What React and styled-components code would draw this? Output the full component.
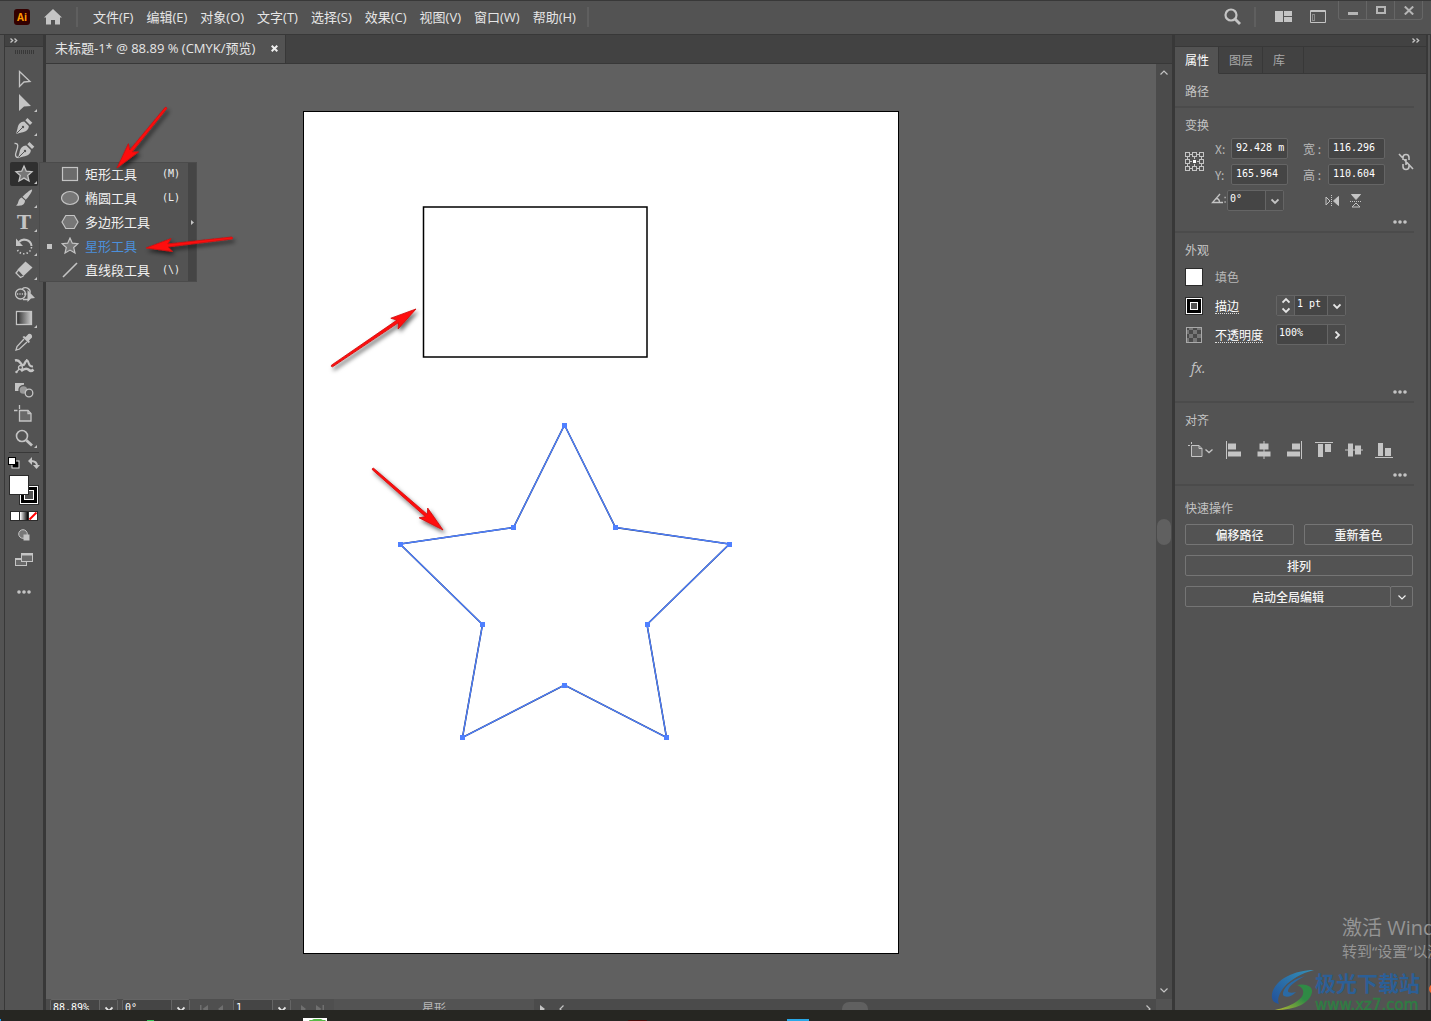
import { useState } from 'react';
import styled, { createGlobalStyle } from 'styled-components';

const c = {
  bg: '#535353',
  dark: '#424242',
  line: '#383838',
  canvas: '#606060',
  track: '#4b4b4b',
  field: '#454545',
  fieldLine: '#656565',
  icon: '#c4c4c4',
  text: '#e6e6e6',
  muted: '#b8b8b8',
  blue: '#4b8fdb',
};

const sans = `"Open Sans", "Noto Sans CJK SC", sans-serif`;
const song = `"Noto Sans CJK SC", sans-serif`;
const mono = `"DejaVu Sans Mono", "Noto Sans CJK SC", monospace`;

const GlobalStyle = createGlobalStyle`
  * { box-sizing: border-box; }
  body { margin: 0; background: ${c.bg}; font-family: ${sans}; color: ${c.text}; overflow: hidden; }
  button, input, select { font: inherit; color: inherit; margin: 0; padding: 0; border: 0; background: none; border-radius: 0; outline: none; }
  select { appearance: none; }
  svg { display: block; flex: none; }
`;

// --- SHELL ---

const Screen = styled.div`
  position: relative; display: flex; flex-direction: column;
  height: 100vh; overflow: hidden; background: ${c.bg};
`;

const TopBar = styled.header`
  display: flex; align-items: center; height: 34px; flex: none;
  padding: 0 0 2px 14px; border-top: 1px solid ${c.line};
`;

const Body = styled.div`
  display: flex; flex: 1; min-height: 0; padding: 0 2px 0 4px;
  border-top: 1px solid ${c.line}; border-right: 1px solid ${c.line};
`;

const Taskbar = styled.footer`
  display: flex; align-items: flex-end; height: 11px; flex: none;
  background: #262622; overflow: hidden;
`;

const TaskIcon = styled.span`
  width: ${({ $w }) => $w}px; height: ${({ $h }) => $h}px;
  margin-left: ${({ $gap }) => $gap}px; background: ${({ $color }) => $color};
  border-radius: ${({ $round }) => ($round ? '4px 4px 0 0' : '0')};
`;

// --- TOP BAR ---

const AiLogo = styled.span`
  display: flex; align-items: center; justify-content: center;
  width: 16px; height: 16px; border-radius: 3px; background: #330000;
  color: #ff9a00; font: bold 10px/16px "Open Sans", sans-serif;
`;

const IconButton = styled.button`
  display: flex; align-items: center; justify-content: center;
  color: ${c.icon}; margin-left: ${({ $gap }) => $gap || 0}px;
`;

const Divider = styled.span`
  width: 2px; height: 20px; background: #5f5f5f; margin: 0 15px 0 ${({ $left }) => $left || 0}px;
`;

const Menu = styled.nav`
  display: flex; gap: 13px;
  button { font-size: 13px; line-height: 20px; white-space: nowrap; }
`;

const Spacer = styled.span` flex: 1; `;

const WindowButtons = styled.div`
  display: flex; align-self: flex-start; height: 19px;
  margin: 0 8px 0 12px; border: 1px solid #666; border-top: 0; border-radius: 0 0 3px 3px;
  button { display: flex; align-items: center; justify-content: center; width: 27px; color: #b5b5b5; }
  button + button { width: 28px; border-left: 1px solid #666; }
`;

// --- TOOL RAIL ---

const Rail = styled.aside`
  display: flex; flex-direction: column; align-items: center; flex: none; width: 42px;
  border-left: 1px solid ${c.line}; border-right: 3px solid ${c.line};
`;

const RailHead = styled.div`
  display: flex; align-items: center; align-self: stretch; height: 12px;
  padding: ${({ $right }) => ($right ? '0 6px 0 0' : '0 0 0 5px')};
  justify-content: ${({ $right }) => ($right ? 'flex-end' : 'flex-start')};
  background: ${c.dark}; border-bottom: 1px solid ${c.line}; color: ${c.icon}; flex: none;
`;

const Grip = styled.span`
  width: 19px; height: 4px; margin: 3px 0 12px;
  background: repeating-linear-gradient(90deg, ${c.line} 0 1px, transparent 1px 2px);
`;

const ToolSlot = styled.div` position: relative; height: 24px; display: flex; align-items: center; `;

const ToolButton = styled.button`
  display: block; width: 28px; height: 24px; color: ${c.icon};
  background: ${({ $active }) => ($active ? '#2f2f2f' : 'transparent')};
  border-radius: 2px;
`;

const RailLine = styled.span` width: 30px; height: 1px; margin: 2px 0 4px; background: ${c.line}; flex: none; `;

const RailButton = styled.button`
  display: flex; justify-content: center; color: ${c.icon}; margin-bottom: ${({ $after }) => $after || 0}px;
`;

const RailRow = styled.div` display: flex; gap: 8px; height: 13px; margin-bottom: 5px; `;

const Flyout = styled.div`
  position: absolute; left: 29px; top: 0; z-index: 5; display: flex; width: 158px;
  background: ${c.bg}; border: 1px solid #4b4b4b;
`;

const FlyoutList = styled.div`
  flex: 1; display: flex; flex-direction: column; padding: 0 0 0 7px; margin-top: -1px; height: 119px;
`;

const FlyoutItem = styled.button`
  display: grid; grid-template-columns: 14px 24px 77px 1fr; align-items: center;
  height: 24px; flex: none; text-align: left;
  font: 13px/20px ${song}; color: ${({ $on }) => ($on ? c.blue : '#f0f0f0')};
  svg { color: ${c.icon}; }
  kbd { font: 10px/20px ${mono}; white-space: nowrap; }
`;

const Bullet = styled.i` width: 5px; height: 5px; background: ${({ $on }) => ($on ? c.icon : 'transparent')}; `;

const TearOff = styled.button`
  display: flex; align-items: center; justify-content: center; width: 8px;
  background: ${c.field}; color: ${c.icon};
`;

// --- DOCUMENT ---

const Doc = styled.main` flex: 1; min-width: 0; display: flex; flex-direction: column; `;

const DocTabs = styled.div`
  display: flex; height: 29px; flex: none; background: ${c.dark}; border-bottom: 1px solid ${c.line};
`;

const DocTab = styled.div`
  display: flex; align-items: center; gap: 16px; padding: 0 7px 2px 9px;
  background: ${c.bg}; border-right: 1px solid ${c.line};
  font-size: 13px; line-height: 20px; white-space: nowrap;
`;

const Stage = styled.div` flex: 1; display: flex; min-height: 0; `;

const Canvas = styled.div`
  flex: 1; display: flex; align-items: center; justify-content: center;
  padding-top: 2px; background: ${c.canvas}; overflow: hidden;
`;

const Artboard = styled.div` flex: none; background: #fff; border: 1px solid #000; `;

const VScroll = styled.div`
  display: flex; flex-direction: column; align-items: center; justify-content: space-between;
  width: 16px; padding: 5px 0; background: ${c.track}; color: ${c.icon};
`;

const Thumb = styled.span`
  width: ${({ $wide }) => ($wide ? 26 : 14)}px; height: ${({ $wide }) => ($wide ? 14 : 26)}px;
  border-radius: 7px; background: ${c.canvas};
`;

const StatusBar = styled.div`
  display: flex; height: 11px; flex: none; overflow: hidden; padding-left: 4px;
  background: #4b4b4b; font: 10px/17px ${mono};
  > * { height: 19px; }
`;

const StatusNav = styled.div`
  display: flex; align-items: center; justify-content: center; gap: 10px;
  width: 43px; color: #6f6f6f; background: #4f4f4f;
`;

const StatusText = styled.div`
  width: 200px; text-align: center; background: ${c.bg}; font: 12px/18px ${song}; color: ${c.muted};
`;

const HScroll = styled.div`
  flex: 1; display: flex; align-items: center; justify-content: space-between;
  padding: 0 4px 0 12px; color: ${c.icon};
`;

const Corner = styled.div` width: 16px; background: ${c.bg}; `;

// --- FORM PARTS ---

const TextField = styled.input`
  width: 100%; min-width: 0; height: 21px; padding: 0 0 3px 4px;
  background: ${c.field}; border: 1px solid ${c.fieldLine}; border-radius: 2px;
  font: 10px/17px ${mono}; color: #fff;
`;

const SelectBox = styled.div`
  position: relative; display: flex; width: ${({ $w }) => $w}px; height: ${({ $h }) => $h || 21}px;
  background: ${c.field}; border: 1px solid ${c.fieldLine}; border-radius: 2px;
  margin-left: ${({ $gap }) => $gap || 0}px;
  select { flex: 1; min-width: 0; padding: 0 20px 3px 2px; font: 10px/16px ${mono}; color: #fff; }
`;

const SelectArrow = styled.span`
  position: absolute; right: 0; top: 0; bottom: 0; width: 18px; pointer-events: none;
  display: flex; align-items: center; justify-content: center;
  background: ${c.track}; border-left: 1px solid ${c.fieldLine};
`;

const Stepper = styled.span`
  display: flex; flex-direction: column; justify-content: space-around; align-items: center;
  width: 18px; border-right: 1px solid ${c.fieldLine}; background: ${c.bg};
`;

// --- PROPERTIES PANEL ---

const Panel = styled.aside`
  display: flex; flex-direction: column; flex: none; width: 256px;
  border-left: 3px solid ${c.line}; border-right: 2px solid ${c.line};
`;

const PanelTabs = styled.div`
  display: flex; height: 27px; background: ${c.dark}; flex: none;
  &::after { content: ''; flex: 1; border-bottom: 1px solid ${c.line}; }
`;

const PanelTab = styled.button`
  padding: 0 ${({ $wide }) => ($wide ? 18 : 9)}px 0 10px; font: 12px/20px ${song};
  color: ${({ $on }) => ($on ? '#fff' : '#a8a8a8')};
  background: ${({ $on }) => ($on ? c.bg : 'transparent')};
  border-right: 1px solid ${c.line};
  border-bottom: 1px solid ${({ $on }) => ($on ? c.bg : c.line)};
`;

const Section = styled.section`
  margin-right: 12px; padding: ${({ $top }) => $top || 9}px 0 ${({ $bottom }) => $bottom || 3}px 10px;
  border-bottom: 2px solid ${({ $last }) => ($last ? 'transparent' : c.track)};
`;

const Heading = styled.h2`
  margin: 0; font: 12px/16px ${song}; color: #c4c4c4;
`;

const TransformGrid = styled.div`
  display: grid; grid-template-columns: 30px 16px 57px 40px 57px 1fr; grid-auto-rows: 21px;
  row-gap: 5px; margin-top: 5px; align-items: center; color: ${c.muted};
  > svg, > button { grid-row: 1 / span 2; }
  > svg { grid-column: 1; }
  > button { grid-column: 6; justify-self: end; }
`;

const FieldLabel = styled.label`
  padding-left: ${({ $wide }) => ($wide ? 15 : 0)}px; font: 12px/16px ${song}; color: ${c.muted}; white-space: nowrap;
`;

const AngleRow = styled.div`
  display: flex; align-items: center; margin-top: 5px; padding-left: 26px; color: ${c.icon};
`;

const MoreButton = styled.button`
  display: flex; align-items: center; justify-content: center; width: 26px; height: 12px;
  margin: ${({ $top }) => $top}px 1px 0 auto; color: ${c.icon};
`;

const LookGrid = styled.div`
  display: grid; grid-template-columns: 30px 61px 70px; grid-auto-rows: 29px;
  align-items: center; margin-top: 4px; font: 12px/16px ${song};
`;

const LinkText = styled.a`
  justify-self: start; color: #fff; text-decoration: none; border-bottom: 1px dotted #ddd; line-height: 15px; white-space: nowrap;
`;

const PlainText = styled.span` color: ${c.muted}; `;

const FxButton = styled.button`
  display: block; margin: 9px 0 0 6px; height: 20px; color: ${c.icon};
  font: italic 14px/20px "Open Sans", sans-serif;
`;

const AlignRow = styled.div`
  display: flex; height: 21px; margin-top: 11px; color: ${c.icon};
  button { display: flex; align-items: center; justify-content: center; width: 30px; }
  button:first-child { width: 34px; justify-content: flex-start; padding-left: 3px; }
`;

const Actions = styled.div`
  display: grid; grid-template-columns: 1fr 1fr; gap: 10px; margin: 8px 1px 0 0;
`;

const ActionButton = styled.button`
  height: 21px; font: 500 12px/17px ${song}; color: #f2f2f2;
  border: 1px solid #757575; border-radius: 2px;
  grid-column: ${({ $full }) => ($full ? '1 / -1' : 'auto')};
`;

const SplitAction = styled.div`
  grid-column: 1 / -1; display: flex;
  ${ActionButton}:first-child { flex: 1; }
  ${ActionButton}:last-child { width: 23px; margin-left: -1px; display: flex; align-items: center; justify-content: center; }
`;

// --- OVERLAYS ---

const Annotations = styled.svg` position: absolute; left: 0; top: 0; z-index: 9; pointer-events: none; `;

const ActivateNote = styled.div`
  position: absolute; right: 0; bottom: 60px; width: 89px; overflow: hidden; z-index: 8;
  color: #959595; white-space: nowrap; pointer-events: none;
  strong { display: block; font: 20px/26px ${sans}; }
  span { display: block; font: 15px/20px ${sans}; }
`;

const SiteMark = styled.div`
  position: absolute; right: 0; bottom: 11px; height: 40px; width: 160px; overflow: hidden; z-index: 8;
  display: flex; gap: 1px; pointer-events: none; white-space: nowrap;
  strong { display: block; font: 700 21px/25px ${song}; color: #2c5f96; }
  span { display: block; font: 15px/20px "DejaVu Sans", sans-serif; color: #2f7d43; -webkit-text-stroke: 0.5px #2f7d43; }
`;

const EdgeDot = styled.i`
  position: absolute; right: -8px; bottom: 27px; width: 10px; height: 10px;
  border-radius: 50%; background: #f0642d; z-index: 8;
`;

// --- ICONS ---

const Chevron = ({ dir = 'down', size = 8, w = 1.5 }) => {
  const turn = { down: 0, left: 90, up: 180, right: 270 }[dir];
  return (
    <svg width={size} height={size} viewBox="0 0 8 8" fill="none" stroke="currentColor" strokeWidth={w}>
      <path d="M.5 2.500 4 6l3.500-3.500" transform={`rotate(${turn} 4 4)`} />
    </svg>
  );
};

const DoubleChevron = () => (
  <svg width="8" height="5" viewBox="0 0 8 5" fill="none" stroke="currentColor" strokeWidth="1.300">
    <path d="M.5.5l2.200 2-2.200 2M4.500.5l2.200 2-2.200 2" />
  </svg>
);

const Dots = () => (
  <svg width="14" height="4" viewBox="0 0 14 4" fill="currentColor">
    <circle cx="2" cy="2" r="1.800" /><circle cx="7" cy="2" r="1.800" /><circle cx="12" cy="2" r="1.800" />
  </svg>
);

const STAR = 'M0-8 2.300-2.800 8-2.300 3.700 1.500 5 7 0 4.100-5 7-3.700 1.500-8-2.300-2.300-2.800Z';

const Pen = () => (
  <g stroke="none">
    <path d="M1.300-5.800 3.500-8 8.300-3.200 6-1Z" fill="currentColor" />
    <path d="M.2-4.600 4.800 0C5 3.500 1.500 6-2.500 6.500L-8 8-6.500 2.500C-6-1.500-3.500-4.600.2-4.600Z" fill="currentColor" />
    <path d="M-7.500 7.500-1.500 1.500" stroke={c.bg} strokeWidth="1" />
    <circle cx="-1" cy="1" r="1.200" fill={c.bg} />
  </g>
);

const solid = { fill: 'currentColor', stroke: 'none' };
const tools = [
  { name: '选择工具', art: <path d="M-4.500-6.500 6 3.500 0 4-4.500 8.500Z" /> },
  { name: '直接选择工具', more: true, art: <path d="M-5-8 7 4 0 4.500-5 9Z" {...solid} /> },
  { name: '钢笔工具', more: true, art: <Pen /> },
  { name: '曲率工具', art: <g><g transform="translate(2 0)"><Pen /></g><path d="M-9.500-6.500C-5-7-6-3-7.500 1-9 5-9 7.500-5.500 7.500" /></g> },
  { name: '星形工具', more: true, art: <path d={STAR} fill="#777" /> },
  { name: '画笔工具', more: true, art: <g {...solid}><path d="M8-8.500C9-7.500 4.500-1 1.800 1.800L-1.500-1.200C1-4 7-9 8-8.500Z" /><path d="M-2.300-.4 1 2.600C1 7-3 8.500-8 7.500-5 6.500-6.500 1-2.300-.4Z" /></g> },
  { name: '文字工具', more: true, art: <text x="0" y="7" textAnchor="middle" fontFamily="DejaVu Serif" fontWeight="bold" fontSize="19" {...solid}>T</text> },
  { name: '旋转工具', more: true, art: <g><path d="M-5-4C-1-8.500 7-6 7.500 0" strokeWidth="2" /><path d="M-8-7.500v7.500h7Z" {...solid} /><path d="M7.500 1C7 8-3 10.500-6.500 4" strokeDasharray="1.500 2" strokeWidth="1.600" /></g> },
  { name: '橡皮擦工具', more: true, art: <g><path d="M1.500-8.500 8.500-2.500-.5 6-6.500-.5Z" {...solid} /><path d="M-5.500 0-8 3-3.500 7.500-.5 6" /></g> },
  { name: '形状生成器工具', art: <g><circle cx="-3.500" cy="0" r="5" /><path d="M-2-5C2-8 7-5 6-1M-1 5.500H4" /><path d="M-7 0H3" strokeDasharray="1.200 1.200" /><path d="M3.500-4 11 4 7 4.500 3.500 8Z" {...solid} /></g> },
  { name: '渐变工具', more: true, art: <rect x="-7.500" y="-6.500" width="15" height="13" fill="url(#gradTool)" /> },
  { name: '吸管工具', art: <g><path d="M3.500-7C5-9.500 9-7.500 8-4.500L5-1.500 6 0 4.500 1-1.500-5 0-6 1.500-5Z" {...solid} /><path d="M0-3-7 4.500-8 8-4.500 7 3 0" /></g> },
  { name: '操控变形工具', art: <g><path d="M-9-5.500C-4-7-4-2-1.500-1 1 0 0-4 3-5.500" strokeWidth="2.400" /><path d="M2-6C6-6 3 1 9 .5" strokeWidth="2" /><path d="M-3 5C1 2 3 2 5 4 6.500 5.500 8 5 9.500 3.500" strokeWidth="2.600" /><circle cx="-3.500" cy="1.500" r="2" fill={c.bg} /><path d="M-8 6.500l3.200-3.500" /><circle cx="-7.500" cy="6" r="1.200" {...solid} /></g> },
  { name: '混合工具', art: <g><rect x="-9" y="-7" width="9" height="8" {...solid} /><circle cx="-.5" cy="0" r="4.500" fill="#999" stroke={c.bg} /><circle cx="5" cy="3" r="3.800" fill={c.bg} /></g> },
  { name: '画板工具', art: <g><path d="M-4.500-3.500H4L7-.5V7H-4.500Z" fill="#696969" /><path d="M4-3.500V-.5H7M-4.500-9V-5M-10-3.500H-6.500" /></g> },
  { name: '缩放工具', more: true, art: <g><circle cx="-2" cy="-2" r="5.500" strokeWidth="1.600" /><path d="M2.300 2.300 8 7.500" strokeWidth="2.800" /></g> },
];

const ToolIcon = ({ tool }) => (
  <svg width="28" height="24" viewBox="-14 -12 28 24" fill="none" stroke="currentColor" strokeWidth="1.300">
    <defs>
      <linearGradient id="gradTool"><stop stopColor="#2b2b2b" /><stop offset="1" stopColor="#ccc" /></linearGradient>
    </defs>
    {tool.art}
    {tool.more && <path d="M13 7v3h-3Z" {...solid} />}
  </svg>
);

const shapeTools = [
  { name: '矩形工具', hotkey: '(M)', art: <rect x="-7.500" y="-6.500" width="15" height="13" fill="#6b6b6b" /> },
  { name: '椭圆工具', hotkey: '(L)', art: <ellipse rx="8.500" ry="6.500" fill="#777" /> },
  { name: '多边形工具', art: <path d="M-8 0-4.200-6.500H4.200L8 0 4.200 6.500H-4.200Z" fill="#777" /> },
  { name: '星形工具', art: <path d={STAR} fill="#777" /> },
  { name: '直线段工具', hotkey: '(\\)', art: <path d="M-7 7 7-7" strokeWidth="1.600" /> },
];

const alignIcons = [
  ['水平左对齐', 'M-8-9h1V9h-1ZM-6-6.500h8v6h-8ZM-6 1.500h13v5h-13Z'],
  ['水平居中对齐', 'M-.5-9h1V9h-1ZM-4.500-6.500h9v6h-9ZM-6.500 1.500h13v5h-13Z'],
  ['水平右对齐', 'M7-9h1V9h-1ZM-2-6.500h8v6h-8ZM-7 1.500H6v5H-7Z'],
  ['垂直顶对齐', 'M-9-8h18v1H-9ZM-6-6h5V7h-5ZM1-6h6v8H1Z'],
  ['垂直居中对齐', 'M-9-.5H9v1H-9ZM-6-6.500h5v13h-5ZM1-4.500h6v9H1Z'],
  ['垂直底对齐', 'M-9 7H9v1H-9ZM-6-7h5V6h-5ZM1-2h6v8H1Z'],
];

const ReferencePoint = () => (
  <svg width="19" height="19" viewBox="0 0 19 19" fill="none" stroke={c.icon}>
    <path d="M2.500 2.500h14v14h-14ZM9.500 2.500v14M2.500 9.500h14" />
    {[2.5, 9.5, 16.5].map(y => [2.5, 9.5, 16.5].map(x => (
      <rect key={`${x}-${y}`} x={x - 2} y={y - 2} width="4" height="4"
        fill={x === 9.5 && y === 9.5 ? '#fff' : c.bg} stroke={x === 9.5 && y === 9.5 ? c.bg : c.icon} />
    )))}
  </svg>
);

const StrokeSwatch = () => (
  <svg width="18" height="18" viewBox="0 0 18 18">
    <rect width="18" height="18" fill="#2b2b2b" />
    <rect x="1.500" y="1.500" width="15" height="15" fill="#000" stroke="#fff" />
    <rect x="5.500" y="5.500" width="7" height="7" fill={c.bg} stroke="#fff" />
  </svg>
);

const Arrow = ({ from, to }) => {
  const dx = to[0] - from[0];
  const dy = to[1] - from[1];
  const len = Math.hypot(dx, dy);
  const angle = (Math.atan2(dy, dx) * 180) / Math.PI;
  return (
    <g filter="url(#arrowShadow)">
      <path
        d={`M0 0L-26-6.500-22-1.500L${-len}-1Q${-len - 1.5} 0 ${-len} 1L-22 1.500-26 6.500Z`}
        transform={`translate(${to[0]} ${to[1]}) rotate(${angle})`}
        fill="#ff0a0a" stroke="#d01010" strokeWidth="0.800"
      />
    </g>
  );
};

// --- DATA ---

const menus = ['文件(F)', '编辑(E)', '对象(O)', '文字(T)', '选择(S)', '效果(C)', '视图(V)', '窗口(W)', '帮助(H)'];

const starPoints = [
  [260.5, 313], [311.5, 415.5], [425.5, 432], [343, 512.5], [362.5, 625.5],
  [260.5, 573], [158.5, 625.5], [178.5, 512.5], [96, 432], [209.5, 415.5],
];

const Select = ({ id, label, value, w, h, gap, arrow = 'down', children }) => (
  <SelectBox $w={w} $h={h} $gap={gap}>
    {children}
    <select id={id} aria-label={label} defaultValue={value}><option>{value}</option></select>
    <SelectArrow><Chevron dir={arrow} w={1.8} /></SelectArrow>
  </SelectBox>
);

const ToolRail = () => {
  const [tool, setTool] = useState('星形工具');
  return (
    <Rail>
      <RailHead><DoubleChevron /></RailHead>
      <Grip />
      {tools.map(t => (
        <ToolSlot key={t.name}>
          <ToolButton aria-label={t.name} $active={t.name === tool} onClick={() => setTool(t.name)}>
            <ToolIcon tool={t} />
          </ToolButton>
          {t.name === '星形工具' && (
            <Flyout>
              <FlyoutList>
                {shapeTools.map(s => (
                  <FlyoutItem key={s.name} $on={s.name === tool}>
                    <Bullet $on={s.name === tool} />
                    <svg width="18" height="18" viewBox="-9 -9 18 18" fill="none" stroke="currentColor" strokeWidth="1.200">{s.art}</svg>
                    <span>{s.name}</span>
                    <kbd>{s.hotkey}</kbd>
                  </FlyoutItem>
                ))}
              </FlyoutList>
              <TearOff aria-label="拖出">
                <svg width="3" height="5" viewBox="0 0 3 5"><path d="M0 0 3 2.500 0 5Z" fill="currentColor" /></svg>
              </TearOff>
            </Flyout>
          )}
        </ToolSlot>
      ))}
      <RailLine />
      <RailRow>
        <RailButton aria-label="默认填色和描边">
          <svg width="12" height="13" viewBox="0 0 12 13">
            <rect x="4" y="4" width="7" height="7" fill="#000" stroke="#ddd" />
            <rect x=".5" y=".5" width="7" height="7" fill="#fff" stroke="#000" />
          </svg>
        </RailButton>
        <RailButton aria-label="互换填色和描边">
          <svg width="12" height="13" viewBox="0 0 12 13" fill="none" stroke="currentColor" strokeWidth="2">
            <path d="M3 4C7 4 9 5 9 9" /><path d="M4 0v8L0 4ZM5 8h7L8.500 12Z" {...solid} />
          </svg>
        </RailButton>
      </RailRow>
      <RailButton aria-label="填色和描边" $after={6}>
        <svg width="30" height="30" viewBox="0 0 30 30">
          <g transform="translate(10 10)">
            <rect width="20" height="20" fill="#2b2b2b" />
            <rect x="1.500" y="1.500" width="17" height="17" fill="#000" stroke="#fff" />
            <rect x="5.500" y="5.500" width="9" height="9" fill={c.bg} stroke="#fff" />
          </g>
          <rect x=".5" y=".5" width="19" height="19" fill="#fff" stroke="#2b2b2b" />
        </svg>
      </RailButton>
      <RailButton aria-label="颜色" $after={8}>
        <svg width="28" height="10" viewBox="0 0 28 10">
          <defs><linearGradient id="bw"><stop stopColor="#fff" /><stop offset="1" /></linearGradient></defs>
          <rect width="28" height="10" fill="#2b2b2b" />
          <rect x="1" y="1" width="8" height="8" fill="#fff" />
          <rect x="10" y="1" width="8" height="8" fill="url(#bw)" />
          <rect x="19" y="1" width="8" height="8" fill="#fff" />
          <path d="M19.500 8.500l7-7" stroke="#f00" strokeWidth="2" />
        </svg>
      </RailButton>
      <RailButton aria-label="绘图模式" $after={12}>
        <svg width="12" height="12" viewBox="0 0 12 12">
          <circle cx="5" cy="5" r="4.300" fill="#777" stroke="currentColor" />
          <rect x="5.500" y="5.500" width="6" height="6" fill="currentColor" />
        </svg>
      </RailButton>
      <RailButton aria-label="屏幕模式" $after={24}>
        <svg width="18" height="13" viewBox="0 0 18 13" fill="#696969" stroke="currentColor">
          <rect x=".5" y="5.500" width="11" height="7" /><path d="M1 6h10" strokeWidth="2" />
          <rect x="6.500" y=".5" width="11" height="8" /><path d="M7 1.500h10" strokeWidth="2" />
        </svg>
      </RailButton>
      <RailButton aria-label="编辑工具栏"><Dots /></RailButton>
    </Rail>
  );
};

const DocumentArea = () => (
  <Doc>
    <DocTabs>
      <DocTab>
        未标题-1* @ 88.89 % (CMYK/预览)
        <IconButton aria-label="关闭">
          <svg width="7" height="7" viewBox="0 0 7 7" stroke="#eee" strokeWidth="2"><path d="M.7.7l5.600 5.600M6.300.7.7 6.300" /></svg>
        </IconButton>
      </DocTab>
    </DocTabs>
    <Stage>
      <Canvas>
        <Artboard>
          <svg width="594" height="841" viewBox="0 0 594 841" fill="none">
            <rect x="119.500" y="95" width="223.500" height="150" stroke="#000" strokeWidth="1.500" />
            <polygon points={starPoints.join(' ')} stroke="#1c2a4a" strokeWidth="1.500" />
            <polygon points={starPoints.join(' ')} stroke="#4f80ff" strokeWidth="1.300" />
            {starPoints.map(([x, y]) => (
              <rect key={`${x}-${y}`} x={Math.floor(x) - 2} y={Math.floor(y) - 2} width="5" height="5" fill="#4f80ff" />
            ))}
          </svg>
        </Artboard>
      </Canvas>
      <VScroll><Chevron dir="up" w={1.2} /><Thumb /><Chevron w={1.2} /></VScroll>
    </Stage>
    <StatusBar>
      <Select label="缩放" value="88.89%" w={68} h={19} />
      <Select label="旋转视图" value="0°" w={68} h={19} gap={4} />
      <StatusNav>
        <svg width="8" height="8" viewBox="0 0 8 8" fill="currentColor"><path d="M0 0h1.500v8H0ZM8 0v8L2.500 4Z" /></svg>
        <svg width="5" height="8" viewBox="0 0 5 8" fill="currentColor"><path d="M5 0v8L0 4Z" /></svg>
      </StatusNav>
      <Select label="画板" value="1" w={58} h={19} />
      <StatusNav>
        <svg width="5" height="8" viewBox="0 0 5 8" fill="currentColor"><path d="M0 0v8l5-4Z" /></svg>
        <svg width="8" height="8" viewBox="0 0 8 8" fill="currentColor"><path d="M6.500 0H8v8H6.500ZM0 0v8l5.500-4Z" /></svg>
      </StatusNav>
      <StatusText>星形</StatusText>
      <IconButton aria-label="状态栏选项" $gap={6}>
        <svg width="6" height="8" viewBox="0 0 6 8" fill="currentColor"><path d="M0 0v8l5-4Z" /></svg>
      </IconButton>
      <HScroll><Chevron dir="left" w={1.2} /><Thumb $wide /><Chevron dir="right" w={1.2} /></HScroll>
      <Corner />
    </StatusBar>
  </Doc>
);

const Properties = () => {
  const [tab, setTab] = useState('属性');
  return (
    <Panel>
      <RailHead $right><DoubleChevron /></RailHead>
      <PanelTabs>
        {['属性', '图层', '库'].map(t => (
          <PanelTab key={t} $on={t === tab} $wide={t === '库'} onClick={() => setTab(t)}>{t}</PanelTab>
        ))}
      </PanelTabs>

      <Section $bottom={7}><Heading>路径</Heading></Section>

      <Section>
        <Heading>变换</Heading>
        <TransformGrid>
          <ReferencePoint />
          <FieldLabel htmlFor="x">X:</FieldLabel><TextField id="x" defaultValue="92.428 m" />
          <FieldLabel htmlFor="w" $wide>宽 :</FieldLabel><TextField id="w" defaultValue="116.296" />
          <FieldLabel htmlFor="y">Y:</FieldLabel><TextField id="y" defaultValue="165.964" />
          <FieldLabel htmlFor="h" $wide>高 :</FieldLabel><TextField id="h" defaultValue="110.604" />
          <IconButton aria-label="约束宽高比例">
            <svg width="16" height="18" viewBox="0 0 16 18" fill="none" stroke={c.icon} strokeWidth="1.600">
              <path d="M5 7V4.500C5 .5 11 .5 11 4.500V7M5 11v2.500c0 4 6 4 6 0V11M8 6v6M1 1l14 15" />
            </svg>
          </IconButton>
        </TransformGrid>
        <AngleRow>
          <FieldLabel htmlFor="angle">
            <svg width="16" height="16" viewBox="0 0 16 16" fill="none" stroke={c.icon} strokeWidth="1.300">
              <path d="M9 1 1.500 9.500H12M5 5.500C7.500 5.500 8.500 7 8.500 9.500" />
              <path d="M13.500 4.500h1.200M13.500 9h1.200" />
            </svg>
          </FieldLabel>
          <Select id="angle" label="角度" value="0°" w={57} />
          <IconButton aria-label="水平翻转" $gap={41}>
            <svg width="14" height="12" viewBox="0 0 14 12" fill="none" stroke={c.icon}>
              <path d="M1 2v8l4-4Z" /><path d="M13.500 1.500v9L8.500 6Z" fill={c.icon} /><path d="M6.500 0v12" strokeDasharray="1 1" />
            </svg>
          </IconButton>
          <IconButton aria-label="垂直翻转" $gap={11}>
            <svg width="12" height="14" viewBox="0 0 12 14" fill="none" stroke={c.icon}>
              <path d="M2 13h8L6 9Z" /><path d="M1.500.5h9L6 5.500Z" fill={c.icon} /><path d="M0 7.500h12" strokeDasharray="1 1" />
            </svg>
          </IconButton>
        </AngleRow>
        <MoreButton $top={5} aria-label="更多变换选项"><Dots /></MoreButton>
      </Section>

      <Section>
        <Heading>外观</Heading>
        <LookGrid>
          <svg width="18" height="18"><rect x=".5" y=".5" width="17" height="17" fill="#fff" stroke="#2b2b2b" /></svg>
          <PlainText>填色</PlainText><span />
          <StrokeSwatch />
          <LinkText href="#stroke">描边</LinkText>
          <Select label="描边粗细" value="1 pt" w={70}>
            <Stepper><Chevron dir="up" w={1.8} /><Chevron w={1.8} /></Stepper>
          </Select>
          <svg width="18" height="18" viewBox="0 0 18 18">
            <defs>
              <pattern id="checks" width="8" height="8" patternUnits="userSpaceOnUse">
                <rect width="8" height="8" fill="#777" /><path d="M0 0h4v4H0ZM4 4h4v4H4Z" fill="#4b4b4b" />
              </pattern>
            </defs>
            <rect x="1.500" y="1.500" width="15" height="15" fill="url(#checks)" stroke="#aaa" />
          </svg>
          <LinkText href="#opacity">不透明度</LinkText>
          <Select label="不透明度" value="100%" w={70} arrow="right" />
        </LookGrid>
        <FxButton>fx.</FxButton>
        <MoreButton $top={8} aria-label="更多外观选项"><Dots /></MoreButton>
      </Section>

      <Section>
        <Heading>对齐</Heading>
        <AlignRow>
          <button aria-label="对齐画板">
            <svg width="25" height="18" viewBox="0 0 25 18" fill="none" stroke="currentColor">
              <path d="M3.500 4.500H11l3 3v8H3.500Z" fill="#696969" /><path d="M11 4.500v3h3M3.500 1v2M0 4.500h2" />
              <path d="M17.500 8.500l3.500 3 3.500-3" strokeWidth="1.400" />
            </svg>
          </button>
          {alignIcons.map(([name, d]) => (
            <button key={name} aria-label={name}>
              <svg width="18" height="18" viewBox="-9 -9 18 18" fill="currentColor"><path d={d} /></svg>
            </button>
          ))}
        </AlignRow>
        <MoreButton $top={9} aria-label="更多对齐选项"><Dots /></MoreButton>
      </Section>

      <Section $top={14} $last>
        <Heading>快速操作</Heading>
        <Actions>
          <ActionButton>偏移路径</ActionButton>
          <ActionButton>重新着色</ActionButton>
          <ActionButton $full>排列</ActionButton>
          <SplitAction>
            <ActionButton>启动全局编辑</ActionButton>
            <ActionButton aria-label="全局编辑选项"><Chevron w={1.2} /></ActionButton>
          </SplitAction>
        </Actions>
      </Section>
    </Panel>
  );
};

const App = () => (
  <Screen>
    <GlobalStyle />
    <TopBar>
      <AiLogo>Ai</AiLogo>
      <IconButton aria-label="主页" $gap={14}>
        <svg width="18" height="16" viewBox="0 0 18 16" fill="currentColor"><path d="M9 0l9 8.500h-2V15.500h-5V11H7v4.500H2V8.500H0Z" /></svg>
      </IconButton>
      <Divider $left={14} />
      <Menu>{menus.map(m => <button key={m}>{m}</button>)}</Menu>
      <Divider $left={11} />
      <Spacer />
      <IconButton aria-label="搜索">
        <svg width="17" height="17" viewBox="0 0 17 17" fill="none" stroke="currentColor" strokeWidth="2.200">
          <circle cx="7" cy="7" r="5.500" /><path d="M11 11l5 5" strokeWidth="2.800" />
        </svg>
      </IconButton>
      <Divider $left={13} />
      <IconButton aria-label="排列文档" $gap={4}>
        <svg width="17" height="11" viewBox="0 0 17 11" fill="currentColor"><path d="M0 0h8v11H0ZM9 0h8v5H9ZM9 6h8v5H9Z" /></svg>
      </IconButton>
      <IconButton aria-label="切换工作区" $gap={18}>
        <svg width="16" height="13" viewBox="0 0 16 13" fill="none" stroke="currentColor">
          <path d="M.5.5h15v12H.5ZM0 1.500h16" /><path d="M2.500 4.500h2v6h-2Z" strokeDasharray="1 1" />
        </svg>
      </IconButton>
      <WindowButtons>
        <button aria-label="最小化"><svg width="10" height="9"><path d="M0 6h10v3H0Z" fill="currentColor" /></svg></button>
        <button aria-label="最大化"><svg width="10" height="8"><rect x="1" y="1" width="8" height="6" fill="none" stroke="currentColor" strokeWidth="2" /></svg></button>
        <button aria-label="关闭窗口"><svg width="10" height="9" viewBox="0 0 10 9"><path d="M.8.5l8.400 8M9.200.5.8 8.500" stroke="currentColor" strokeWidth="2" /></svg></button>
      </WindowButtons>
    </TopBar>

    <Body>
      <ToolRail />
      <DocumentArea />
      <Properties />
    </Body>

    <Taskbar>
      <TaskIcon $w={1} $h={2} $gap={0} $color="#1d9bf0" />
      <TaskIcon $w={7} $h={1} $gap={146} $color="#35c759" />
      <TaskIcon $w={24} $h={3} $gap={149} $color="radial-gradient(ellipse at 60% 100%, #57b947 0 8px, #fff 9px)" />
      <TaskIcon $w={19} $h={1} $gap={301} $color="#4a0a08" $round />
      <TaskIcon $w={22} $h={2} $gap={140} $color="#29a8e8" />
    </Taskbar>

    <ActivateNote>
      <strong>激活 Windows</strong>
      <span>转到“设置”以激活 Windows。</span>
    </ActivateNote>

    <SiteMark>
      <svg width="43" height="42" viewBox="0 0 43 42">
        <defs>
          <linearGradient id="markBlue" x1="0" y1="1" x2="1" y2="0"><stop stopColor="#22509a" /><stop offset="1" stopColor="#3391b8" /></linearGradient>
          <linearGradient id="markGreen" x1="0" y1="1" x2="1" y2="0"><stop stopColor="#b5b832" /><stop offset=".6" stopColor="#2f8a45" /></linearGradient>
        </defs>
        <path d="M43 0C24 0 4 9 1 24c-1 6 2 9 7 10C4 25 16 7 43 0Z" fill="url(#markBlue)" />
        <path d="M34 6C19 10 11 19 12 25c2 3 9 2 13-3-4 1-8 1-8-1 0-4 7-10 17-15Z" fill="#2a6aa5" />
        <path d="M26 15c8-2 16 1 15 7C39 33 25 40 4 40c10-2 26-8 28-16 1-4-1-7-6-9Z" fill="url(#markGreen)" />
      </svg>
      <div><strong>极光下载站</strong><span>www.xz7.com</span></div>
    </SiteMark>
    <EdgeDot />

    <Annotations width="460" height="560">
      <defs>
        <filter id="arrowShadow" x="-30%" y="-60%" width="160%" height="240%">
          <feDropShadow dx="2" dy="3" stdDeviation="2" floodColor="#000" floodOpacity="0.600" />
        </filter>
      </defs>
      <Arrow from={[166, 108]} to={[117, 168]} />
      <Arrow from={[232, 238]} to={[146, 248]} />
      <Arrow from={[332, 366]} to={[416, 309]} />
      <Arrow from={[373, 469]} to={[443, 530]} />
    </Annotations>
  </Screen>
);

export default App;
